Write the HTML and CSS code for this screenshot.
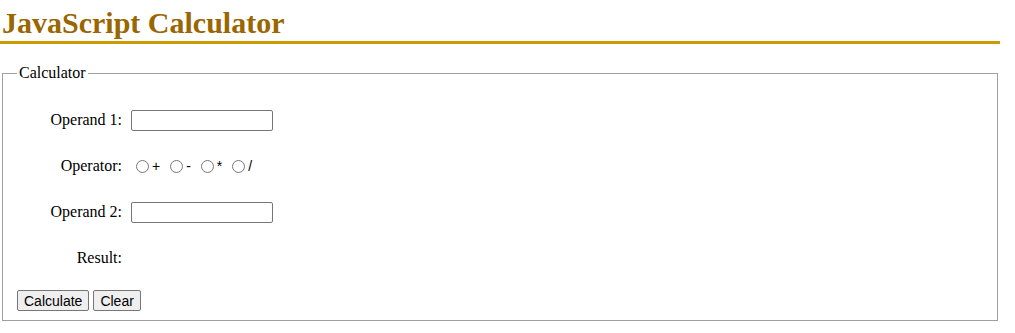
FILE: index.html
```html
<!DOCTYPE html>
<html>
<head>
<meta charset="utf-8">
<title>JavaScript Calculator</title>
<link rel="stylesheet" href="styles.css">
</head>
<body>
<div class="page">
  <h1 class="title">JavaScript Calculator</h1>
  <fieldset class="calc">
    <legend class="calc-legend">Calculator</legend>
    <div class="rows">
      <div class="row">
        <span class="lbl">Operand 1:</span>
        <input class="field" type="text">
      </div>
      <div class="row">
        <span class="lbl">Operator:</span>
        <span class="ops">
          <label class="op"><input type="radio" name="op" class="radio">+</label>
          <label class="op"><input type="radio" name="op" class="radio">-</label>
          <label class="op"><input type="radio" name="op" class="radio">*</label>
          <label class="op"><input type="radio" name="op" class="radio">/</label>
        </span>
      </div>
      <div class="row">
        <span class="lbl">Operand 2:</span>
        <input class="field" type="text">
      </div>
      <div class="row">
        <span class="lbl">Result:</span>
        <span class="result"></span>
      </div>
    </div>
    <div class="buttons">
      <button class="btn" type="button">Calculate</button>
      <button class="btn" type="button">Clear</button>
    </div>
  </fieldset>
</div>
</body>
</html>
```

FILE: styles.css
```css
body {
  margin: 0;
  font-family: "Liberation Serif", "Times New Roman", serif;
  font-size: 16px;
  color: #000;
  background: #fff;
}
.page {
  width: 1000px;
}
.title {
  margin: 0 0 20px 0;
  padding: 5px 0 0 2px;
  font-size: 30px;
  line-height: 36px;
  color: #996600;
  border-bottom: 3px solid #cc9900;
}
.calc {
  margin: 0 2px;
  padding: 6px 12px 9px 14px;
  border: 1px solid #a0a0a0;
}
.calc-legend {
  padding: 0 2px;
}
.rows {
  display: grid;
  grid-template-columns: 105px auto;
  grid-auto-rows: 46px;
  column-gap: 9px;
  margin-top: 9px;
  justify-content: start;
}
.row {
  display: contents;
}
.lbl {
  text-align: right;
  align-self: center;
}
.field {
  align-self: center;
  box-sizing: border-box;
  width: 142px;
  height: 21px;
  margin: 0;
  border: 1px solid #767676;
  border-radius: 2px;
  padding: 1px 2px;
}
.ops {
  align-self: center;
  display: flex;
  font-family: "Liberation Sans", Arial, sans-serif;
  font-size: 14px;
}
.op {
  display: inline-flex;
  align-items: center;
  margin-right: 5px;
}
.radio {
  margin: 0 3px 0 5px;
  width: 13px;
  height: 13px;
}
.buttons {
  display: flex;
  gap: 4px;
  margin-top: 9px;
}
.btn {
  font-family: "Liberation Sans", Arial, sans-serif;
  font-size: 14px;
  height: 21px;
  padding: 1px 6px;
  margin: 0;
  border: 1px solid #767676;
  border-radius: 2px;
  background: #efefef;
  color: #000;
}
```
